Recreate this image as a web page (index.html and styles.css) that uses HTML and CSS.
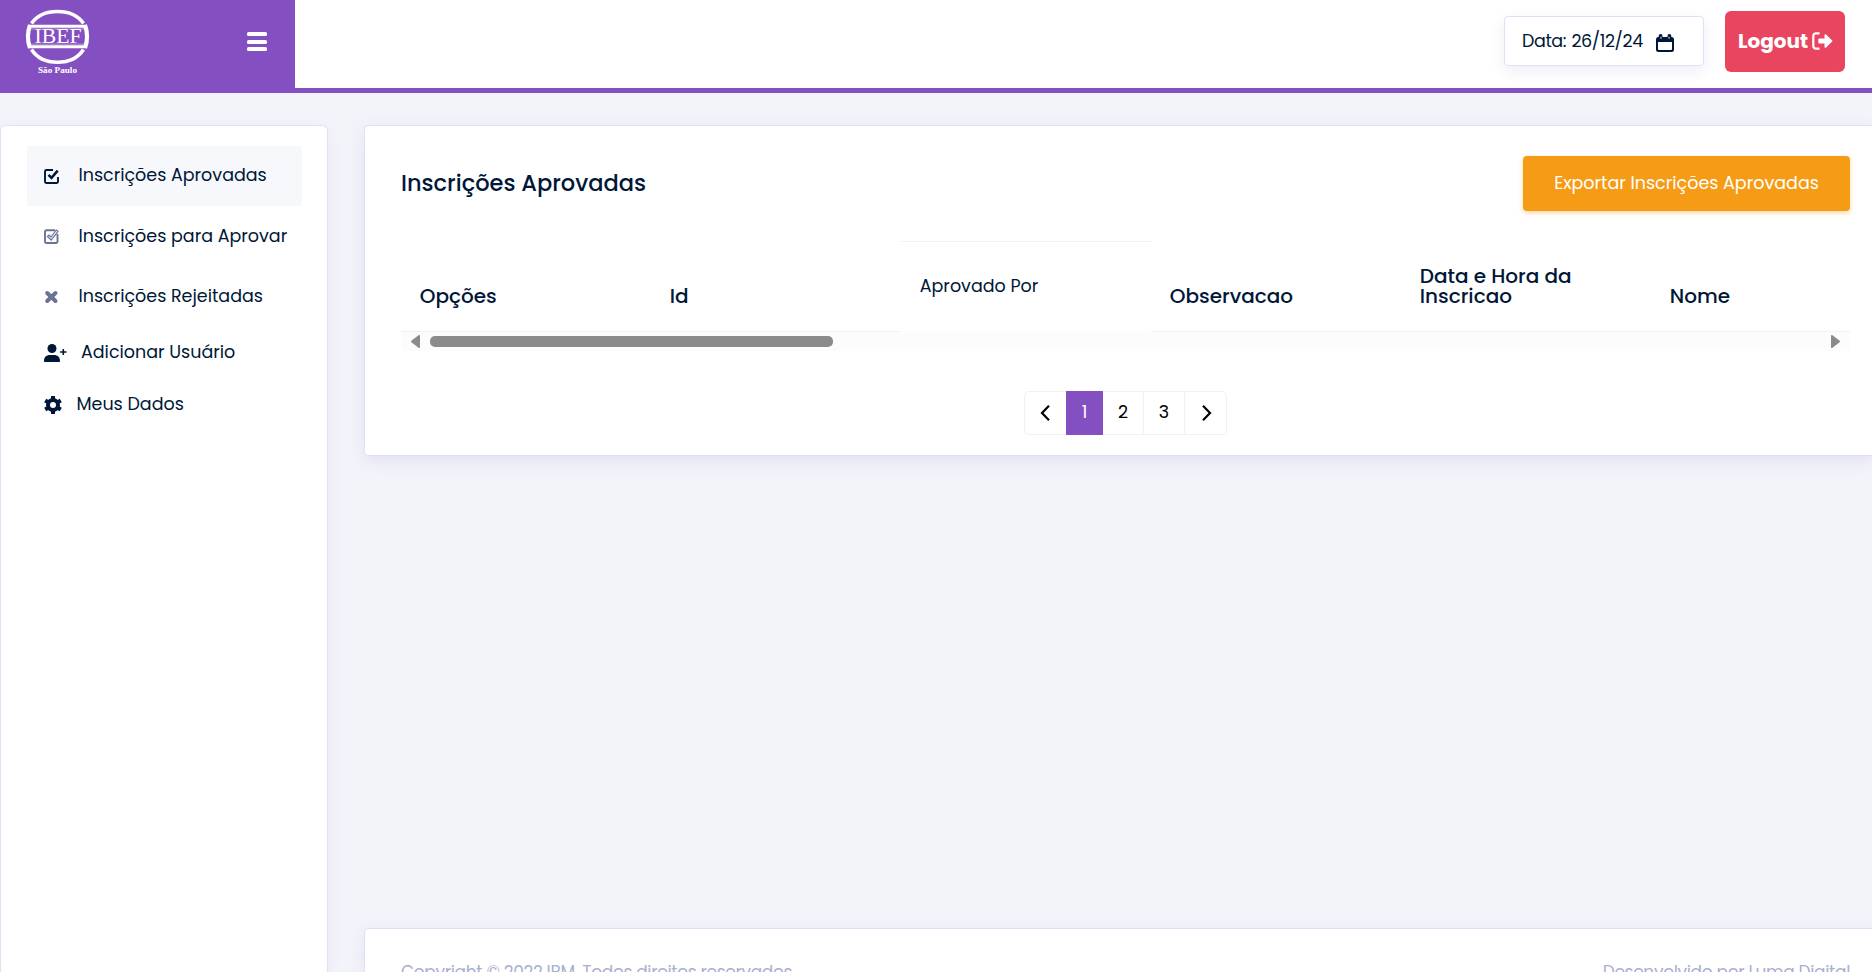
FILE: index.html
```html
<!DOCTYPE html>
<html lang="pt-BR">
<head>
<meta charset="utf-8">
<title>Inscrições Aprovadas</title>
<link rel="stylesheet" href="styles.css">
</head>
<body>
<header class="topbar">
  <div class="brand">
    <svg class="logo" width="66" height="68" viewBox="0 0 66 68">
      <g fill="none" stroke="#fff">
        <path d="M6.500 18.500C12 10.500 21 6.500 32.500 6.500S53 10.500 58.500 18.500" stroke-width="3.600"/>
        <path d="M6.500 44.500C12 53 21 57.200 32.500 57.200S53 53 58.500 44.500" stroke-width="3.600"/>
        <path d="M4 21.300H61M4 41.800H61" stroke-width="3"/>
        <path d="M5.500 24H59.500M5.500 39.200H59.500" stroke-width=".7" opacity=".6"/>
        <path d="M5 20C2.500 27 2.500 36 5 43M60 20C62.500 27 62.500 36 60 43" stroke-width="4.200"/>
      </g>
      <text x="9.500" y="38.300" class="logo-name" textLength="47" lengthAdjust="spacingAndGlyphs">IBEF</text>
      <text x="13" y="68" class="logo-city" textLength="39" lengthAdjust="spacingAndGlyphs">São Paulo</text>
    </svg>
    <svg class="burger" width="20" height="20" viewBox="0 0 20 20" fill="#fff"><rect y="0" width="20" height="4" rx="1.500"/><rect y="8" width="20" height="4" rx="1.500"/><rect y="15" width="20" height="4" rx="1.500"/></svg>
  </div>
  <div class="tools">
    <div class="date"><span class="date-text">Data: 26/12/24</span>
      <svg width="18" height="18" viewBox="0 0 18 18"><path d="M2.500 3A2.500 2.500 0 0 0 0 5.500v10A2.500 2.500 0 0 0 2.500 18h13a2.500 2.500 0 0 0 2.500-2.500v-10A2.500 2.500 0 0 0 15.500 3zM2 8h14v7a1 1 0 0 1-1 1H3a1 1 0 0 1-1-1z" fill="#001737" fill-rule="evenodd"/><path d="M2.700 3.500V2a1.900 1.900 0 0 1 3.800 0v1.500M11.500 3.500V2a1.900 1.900 0 0 1 3.800 0v1.500" fill="#001737"/><path d="M5 2.700v2M13 2.700v2" stroke="#dfe2ea" stroke-width="1.100"/></svg>
    </div>
    <a class="logout"><span>Logout</span>
      <svg width="21" height="18" viewBox="0 0 21 18"><path d="M7.500 1.300H4A2.700 2.700 0 0 0 1.300 4V14A2.700 2.700 0 0 0 4 16.700H7.500" fill="none" stroke="#fff" stroke-width="2.200"/><path d="M7.200 6.600h5.300V3.200c0-.9 1-1.300 1.600-.7L20.200 8.400c.4.400.4.800 0 1.200l-6.100 5.900c-.6.600-1.600.2-1.600-.7v-3.400H7.200c-.5 0-.9-.4-.9-.9V7.500c0-.5.400-.9.900-.9z" fill="#fff"/></svg>
    </a>
  </div>
</header>
<div class="page">
  <nav class="sidebar">
    <a class="item tall active"><svg width="15" height="15" viewBox="0 0 15 15" fill="none" stroke="#001737" stroke-width="1.900"><path d="M9 1H2.500A1.500 1.500 0 0 0 1 2.500v10A1.500 1.500 0 0 0 2.500 14h10a1.500 1.500 0 0 0 1.500-1.500V8"/><path d="M4.500 5.800 7.500 8.800 13.700 1.600" stroke-width="2.600"/></svg><span class="up">Inscrições Aprovadas</span></a>
    <a class="item tall"><svg width="15" height="15" viewBox="0 0 15 15" fill="none" stroke="#6c7293" stroke-width="1.900"><path d="M11 1.200H2.500A1.500 1.500 0 0 0 1 2.700v9.800A1.500 1.500 0 0 0 2.500 14h9.500a1.500 1.500 0 0 0 1.500-1.500V5"/><path d="M3.500 7.500 5 6 7 8 12.300 1 14 2.300 7.200 11z" stroke-width="1.200"/></svg><span>Inscrições para Aprovar</span></a>
    <a class="item tall"><svg width="15" height="15" viewBox="0 0 15 15"><path d="M3.200 4 11.500 12M11.500 4 3.200 12" stroke="#6c7293" stroke-width="4" stroke-linecap="round"/></svg><span>Inscrições Rejeitadas</span></a>
    <a class="item user"><svg width="23" height="18" viewBox="0 0 23 18" fill="#001737"><circle cx="8" cy="4.500" r="4.500"/><path d="M0 17c0-4 2.500-6 6-6h4c3.500 0 6 2 6 6 0 .6-.4 1-1 1H1c-.6 0-1-.4-1-1zM18.500 5h1.600v2.200h2.400v1.600h-2.400V11h-1.600V8.800h-2.400V7.200h2.400z"/></svg><span class="up">Adicionar Usuário</span></a>
    <a class="item gear"><svg width="18" height="18" viewBox="0 0 18 18"><circle cx="9" cy="9" r="5" fill="none" stroke="#001737" stroke-width="4"/><path d="M9 0v4M9 14v4M1.200 4.500l3.500 2M13.300 11.500l3.500 2M1.200 13.500l3.500-2M13.300 6.500l3.500-2" stroke="#001737" stroke-width="4"/></svg><span class="up">Meus Dados</span></a>
  </nav>
  <main class="main">
    <section class="card">
      <div class="card-head">
        <h1 class="title">Inscrições Aprovadas</h1>
        <a class="export"><span class="up">Exportar Inscrições Aprovadas</span></a>
      </div>
      <div class="table">
        <div class="th">Opções</div>
        <div class="th">Id</div>
        <div class="td">Aprovado Por</div>
        <div class="th">Observacao</div>
        <div class="th">Data e Hora da<br>Inscricao</div>
        <div class="th">Nome</div>
      </div>
      <div class="scroll">
        <svg width="9" height="13" viewBox="0 0 9 13"><path d="M7.500.3C8.300-.2 9 .1 9 1v11c0 .9-.7 1.200-1.500.7L.7 7.500c-.9-.7-.9-1.300 0-2z" fill="#8b8b8b"/></svg>
        <div class="thumb"></div>
        <svg class="right" width="9" height="13" viewBox="0 0 9 13"><path d="M1.500.3C.7-.2 0 .1 0 1v11c0 .9.700 1.200 1.500.7l6.800-5.200c.9-.7.9-1.300 0-2z" fill="#8b8b8b"/></svg>
      </div>
      <div class="pager">
        <a class="pg first"><svg width="10" height="16" viewBox="0 0 10 16"><path d="M9 .8 2 8l7 7.200" fill="none" stroke="#000" stroke-width="2.200"/></svg></a>
        <a class="pg on"><span class="up">1</span></a>
        <a class="pg"><span class="up">2</span></a>
        <a class="pg"><span class="up">3</span></a>
        <a class="pg end"><svg width="10" height="16" viewBox="0 0 10 16"><path d="M1 .8 8 8l-7 7.200" fill="none" stroke="#000" stroke-width="2.200"/></svg></a>
      </div>
    </section>
    <footer class="footer"><span>Copyright © 2022 IBM. Todos direitos reservados.</span><span>Desenvolvido por Luma Digital</span></footer>
  </main>
</div>
</body>
</html>
```
FILE: styles.css
```css
* { box-sizing: border-box; }
body {
  margin: 0; height: 972px; overflow: hidden; background: #f3f4fa; color: #001737;
  font-family: Poppins, Inter, "Open Sans", sans-serif;
  font-size: 17.5px; line-height: 24px;
}
span { white-space: nowrap; }
.up { padding-bottom: 2px; }
.topbar { display: flex; height: 93px; background: #fff; border-bottom: 5px solid #844fc1; }
.brand { display: flex; justify-content: space-between; width: 295px; height: 93px; background: #844fc1; padding: 5px 28px 0 25px; flex: none; }
.logo { overflow: visible; }
.logo-name { font: 21px "Liberation Serif", serif; fill: #fff; }
.logo-city { font: bold 8px "Liberation Serif", serif; fill: #fff; }
.burger { margin-top: 27px; }
.tools { display: flex; flex: 1; justify-content: flex-end; gap: 21px; padding: 11px 27px 0 0; }
.date { display: flex; align-items: flex-start; justify-content: space-between; width: 200px; height: 50px; margin-top: 5px; border: 1px solid #e3e0f5; border-radius: 4px; box-shadow: 0 5px 14px rgba(90, 80, 170, .1); padding: 12px 29px 0 17px; }
.date-text { letter-spacing: -.4px; word-spacing: 1px; }
.date svg { margin-top: 5px; }
.logout { display: flex; align-items: flex-start; gap: 4px; width: 120px; height: 61px; background: #ea4560; border-radius: 6px; padding: 18px 0 0 13px; color: #fff; font-size: 20px; font-weight: 700; }
.logout svg { margin-top: 3px; }
.page { display: flex; height: 879px; padding-top: 32px; }
.sidebar { width: 328px; flex: none; background: #fff; border: 1px solid #e3e0f5; border-bottom: 0; border-radius: 6px 6px 0 0; box-shadow: 0 5px 14px rgba(90, 80, 170, .08); padding: 20px 25px 0 26px; }
.item { display: flex; align-items: center; padding-left: 17px; }
.item svg { flex: none; }
.tall { height: 60px; gap: 19.4px; }
.active { background: #f7f8fc; }
.user { height: 54px; gap: 14px; }
.gear { height: 50px; gap: 14.5px; }
.main { display: flex; flex-direction: column; flex: 1; margin-left: 36px; min-width: 0; }
.card { height: 331px; flex: none; background: #fff; border: 1px solid #e3e0f5; border-right: 0; border-radius: 5px 0 0 5px; box-shadow: 0 5px 16px rgba(90, 80, 170, .12); padding: 30px 22px 0 36px; }
.card-head { display: flex; justify-content: space-between; height: 85px; }
.title { margin: 14px 0 0; font-size: 22.5px; font-weight: 500; line-height: 26px; }
.export { display: flex; align-items: center; justify-content: center; width: 327px; height: 55px; background: #f59b15; border-radius: 4px; box-shadow: 0 2px 5px rgba(245, 155, 21, .4); color: #fff; }
.table { display: grid; grid-template-columns: repeat(5, 250px) 1fr; height: 91px; }
.th { align-content: end; border-bottom: 1px solid #f1f1f3; padding: 0 0 25px 18.75px; font-size: 20px; font-weight: 500; line-height: 20px; }
.td { border-top: 1px solid #f1f1f3; padding: 32px 0 0 18.75px; }
.scroll { display: flex; align-items: center; height: 19px; background: #fcfcfc; padding: 0 10px; }
.thumb { width: 403px; height: 11px; border-radius: 5px; background: #8b8b8b; margin-left: 10px; }
.right { margin-left: auto; }
.pager { display: flex; width: 203px; height: 44px; margin: 40px 0 0 623px; color: #000; }
.pg { display: flex; align-items: center; justify-content: center; width: 41px; border: 1px solid #f1f1f3; border-left: 0; }
.pg svg { margin-bottom: 1px; }
.first { width: 42px; border: 1px solid #f1f1f3; border-right: 0; border-radius: 5px 0 0 5px; padding-right: 1px; }
.on { width: 37px; background: #844fc1; border: 0; color: #fff; }
.end { width: 42px; border-radius: 0 5px 5px 0; padding-left: 2px; }
.footer { display: flex; justify-content: space-between; height: 44px; flex: none; margin-top: auto; overflow: hidden; background: #fff; border: 1px solid #e3e0f5; border-right: 0; border-bottom: 0; border-radius: 5px 0 0 0; padding: 31px 22px 0 36px; color: #a9afd0; font-size: 17px; letter-spacing: -.33px; box-shadow: 0 5px 16px rgba(90, 80, 170, .12); }
```
